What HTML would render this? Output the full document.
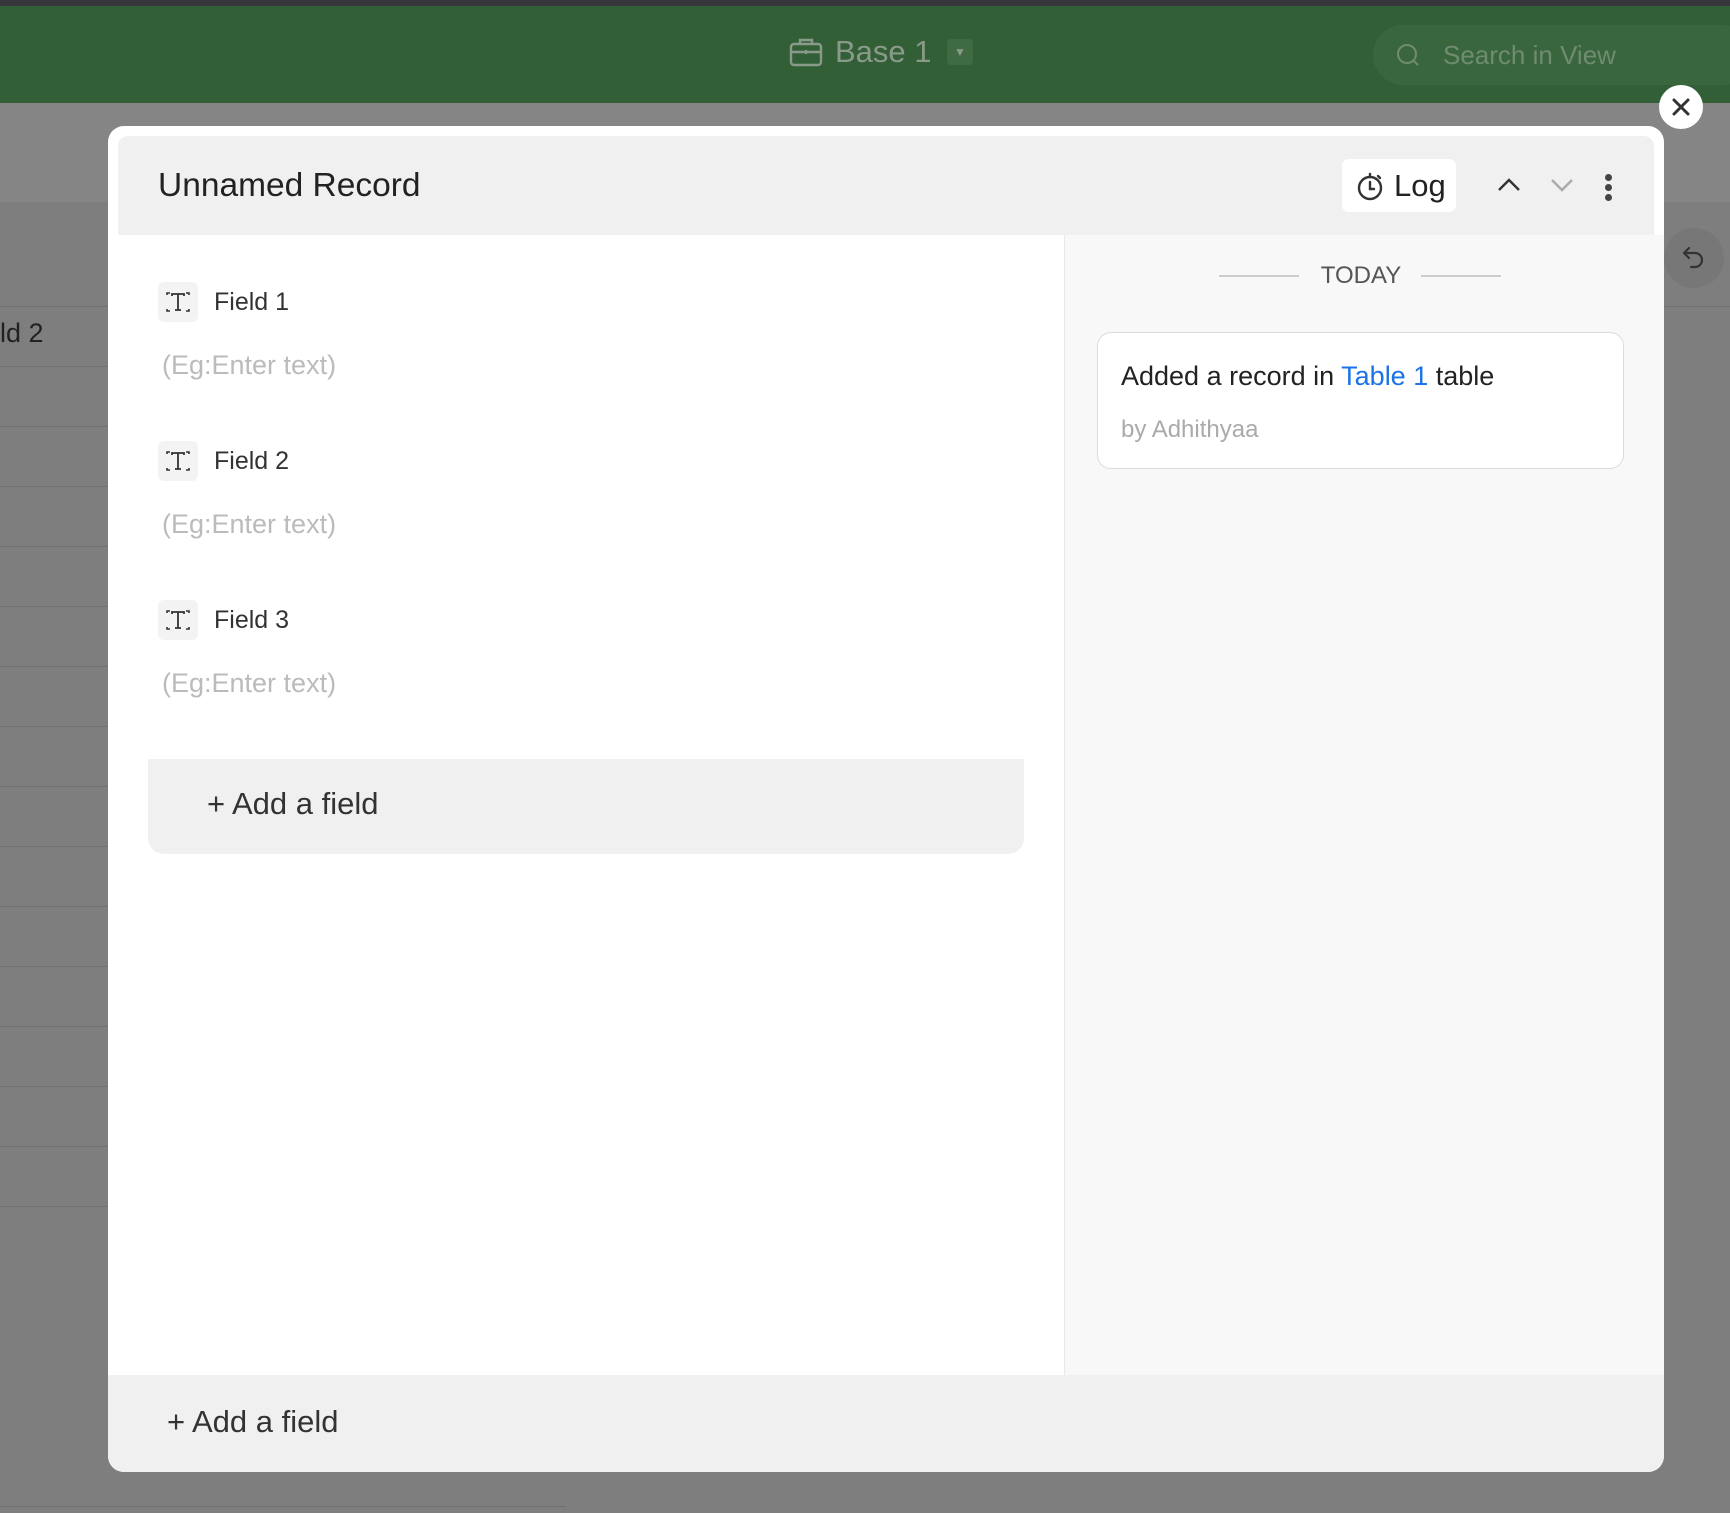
<!DOCTYPE html>
<html><head><meta charset="utf-8"><style>
*{margin:0;padding:0;box-sizing:border-box}
body{width:1730px;height:1513px;overflow:hidden;background:#7e7e7e;font-family:"Liberation Sans",sans-serif;position:relative;color:#333}
.a{position:absolute}
.row{position:absolute;left:0;width:110px;height:1px;background:#707070}
</style></head><body>
<div class="a" style="left:0;top:0;width:1730px;height:6px;background:#36373b"></div>
<div class="a" style="left:0;top:6px;width:1730px;height:97px;background:#335f37"></div>
<div class="a" style="left:0;top:103px;width:1730px;height:99px;background:#858585"></div>
<div class="a" style="left:1373px;top:25px;width:380px;height:60px;border-radius:30px;background:#3a663d"></div>
<svg class="a" style="left:1395px;top:42px" width="26" height="26" viewBox="0 0 26 26"><circle cx="12" cy="12" r="9" fill="none" stroke="#6f8c70" stroke-width="2"/><path d="M19 19l4 4" stroke="#6f8c70" stroke-width="2"/></svg>
<div class="a" style="left:1443px;top:40px;font-size:26px;color:#6f8c70">Search in View</div>
<svg class="a" style="left:789px;top:37px" width="34" height="30" viewBox="0 0 34 30"><rect x="2" y="7" width="30" height="21" rx="3" fill="none" stroke="#8a9a8a" stroke-width="2.4"/><path d="M11 7V3h12v4M2 15h30M17 13v4" fill="none" stroke="#8a9a8a" stroke-width="2.4"/></svg>
<div class="a" style="left:835px;top:34px;font-size:31px;color:#8a9a8a">Base 1</div>
<div class="a" style="left:947px;top:39px;width:26px;height:26px;border-radius:4px;background:#3f6a42;color:#8a9a8a;font-size:12px;text-align:center;line-height:26px">▼</div>
<div class="a" style="left:0;top:318px;font-size:27px;color:#222">ld 2</div>
<div class="row" style="top:306px"></div><div class="row" style="top:366px"></div><div class="row" style="top:426px"></div><div class="row" style="top:486px"></div><div class="row" style="top:546px"></div><div class="row" style="top:606px"></div><div class="row" style="top:666px"></div><div class="row" style="top:726px"></div><div class="row" style="top:786px"></div><div class="row" style="top:846px"></div><div class="row" style="top:906px"></div><div class="row" style="top:966px"></div><div class="row" style="top:1026px"></div><div class="row" style="top:1086px"></div><div class="row" style="top:1146px"></div><div class="row" style="top:1206px"></div>
<div class="a" style="left:0;top:1506px;width:566px;height:1px;background:#707070"></div>
<div class="a" style="left:1664px;top:306px;width:66px;height:1px;background:#707070"></div>
<div class="a" style="left:1664px;top:228px;width:60px;height:60px;border-radius:30px;background:#777"></div>
<svg class="a" style="left:1680px;top:243px" width="30" height="30" viewBox="0 0 30 30"><path d="M9 5L4 10l5 5M4 10h11a7 7 0 010 14h-4" fill="none" stroke="#333" stroke-width="2.2" stroke-linecap="round" stroke-linejoin="round"/></svg>

<div class="a" style="left:108px;top:126px;width:1556px;height:1346px;background:#fff;border-radius:16px;overflow:hidden">
 <div class="a" style="left:10px;top:10px;width:1536px;height:99px;background:#eff0ef;border-radius:10px 10px 0 0"></div>
 <div class="a" style="left:50px;top:41px;font-size:33.5px;color:#222">Unnamed Record</div>
 <div class="a" style="left:1234px;top:33px;width:114px;height:53px;background:#fff;border-radius:7px"></div>
 <svg class="a" style="left:1248px;top:44px" width="30" height="32" viewBox="0 0 30 32"><circle cx="14" cy="18" r="11" fill="none" stroke="#333" stroke-width="2.4"/><path d="M14 12v7h4M14 4v3M22 6l2 2" fill="none" stroke="#333" stroke-width="2.4" stroke-linecap="round"/></svg>
 <div class="a" style="left:1286px;top:42px;font-size:31px;color:#222">Log</div>
 <svg class="a" style="left:1388px;top:48px" width="26" height="22" viewBox="0 0 26 22"><path d="M3 16l10-10 10 10" fill="none" stroke="#333" stroke-width="2.4"/></svg>
 <svg class="a" style="left:1441px;top:48px" width="26" height="22" viewBox="0 0 26 22"><path d="M3 6l10 10 10-10" fill="none" stroke="#aaa" stroke-width="2.4"/></svg>
 <div class="a" style="left:1497px;top:48px;width:7px;height:7px;border-radius:4px;background:#444"></div>
 <div class="a" style="left:1497px;top:58px;width:7px;height:7px;border-radius:4px;background:#444"></div>
 <div class="a" style="left:1497px;top:68px;width:7px;height:7px;border-radius:4px;background:#444"></div>

 <div class="a" style="left:956px;top:109px;width:600px;height:1140px;background:#f8f8f8;border-left:1px solid #e8e8e8"></div>
 <div class="a" style="left:1111px;top:149px;width:80px;height:2px;background:#ccc"></div>
 <div class="a" style="left:1313px;top:149px;width:80px;height:2px;background:#ccc"></div>
 <div class="a" style="left:1208px;top:136px;width:90px;text-align:center;font-size:24px;color:#555">TODAY</div>
 <div class="a" style="left:989px;top:206px;width:527px;height:137px;background:#fff;border:1px solid #dcdcdc;border-radius:14px"></div>
 <div class="a" style="left:1013px;top:235px;font-size:27px;color:#222">Added a record in <span style="color:#1a73e8">Table 1</span> table</div>
 <div class="a" style="left:1013px;top:290px;font-size:24px;color:#aaa">by Adhithyaa</div>

 <div class="a" style="left:50px;top:156px;width:40px;height:40px;border-radius:6px;background:#f3f3f3"></div>
 <svg class="a" style="left:50px;top:156px" width="40" height="40" viewBox="0 0 40 40"><path d="M9 13v-2h3M31 13v-2h-3M9 27v2h3M31 27v2h-3" fill="none" stroke="#333" stroke-width="1.6"/><path d="M14 14v-2h12v2M20 12v16M17 28h6" fill="none" stroke="#333" stroke-width="1.8"/></svg>
 <div class="a" style="left:106px;top:162px;font-size:25px;color:#333">Field 1</div>
 <div class="a" style="left:54px;top:224px;font-size:27px;color:#bbb">(Eg:Enter text)</div>

 <div class="a" style="left:50px;top:315px;width:40px;height:40px;border-radius:6px;background:#f3f3f3"></div>
 <svg class="a" style="left:50px;top:315px" width="40" height="40" viewBox="0 0 40 40"><path d="M9 13v-2h3M31 13v-2h-3M9 27v2h3M31 27v2h-3" fill="none" stroke="#333" stroke-width="1.6"/><path d="M14 14v-2h12v2M20 12v16M17 28h6" fill="none" stroke="#333" stroke-width="1.8"/></svg>
 <div class="a" style="left:106px;top:321px;font-size:25px;color:#333">Field 2</div>
 <div class="a" style="left:54px;top:383px;font-size:27px;color:#bbb">(Eg:Enter text)</div>

 <div class="a" style="left:50px;top:474px;width:40px;height:40px;border-radius:6px;background:#f3f3f3"></div>
 <svg class="a" style="left:50px;top:474px" width="40" height="40" viewBox="0 0 40 40"><path d="M9 13v-2h3M31 13v-2h-3M9 27v2h3M31 27v2h-3" fill="none" stroke="#333" stroke-width="1.6"/><path d="M14 14v-2h12v2M20 12v16M17 28h6" fill="none" stroke="#333" stroke-width="1.8"/></svg>
 <div class="a" style="left:106px;top:480px;font-size:25px;color:#333">Field 3</div>
 <div class="a" style="left:54px;top:542px;font-size:27px;color:#bbb">(Eg:Enter text)</div>

 <div class="a" style="left:40px;top:633px;width:876px;height:95px;background:#f0f0f0;border-radius:0 0 16px 16px"></div>
 <div class="a" style="left:99px;top:660px;font-size:31px;color:#333">+ Add a field</div>

 <div class="a" style="left:0;top:1249px;width:1556px;height:97px;background:#f0f0f0"></div>
 <div class="a" style="left:59px;top:1278px;font-size:31px;color:#333">+ Add a field</div>
</div>
<div class="a" style="left:1659px;top:85px;width:44px;height:44px;border-radius:22px;background:#fff"></div>
<svg class="a" style="left:1669px;top:95px" width="24" height="24" viewBox="0 0 24 24"><path d="M5 5l14 14M19 5L5 19" stroke="#333" stroke-width="3" stroke-linecap="round"/></svg>
</body></html>
